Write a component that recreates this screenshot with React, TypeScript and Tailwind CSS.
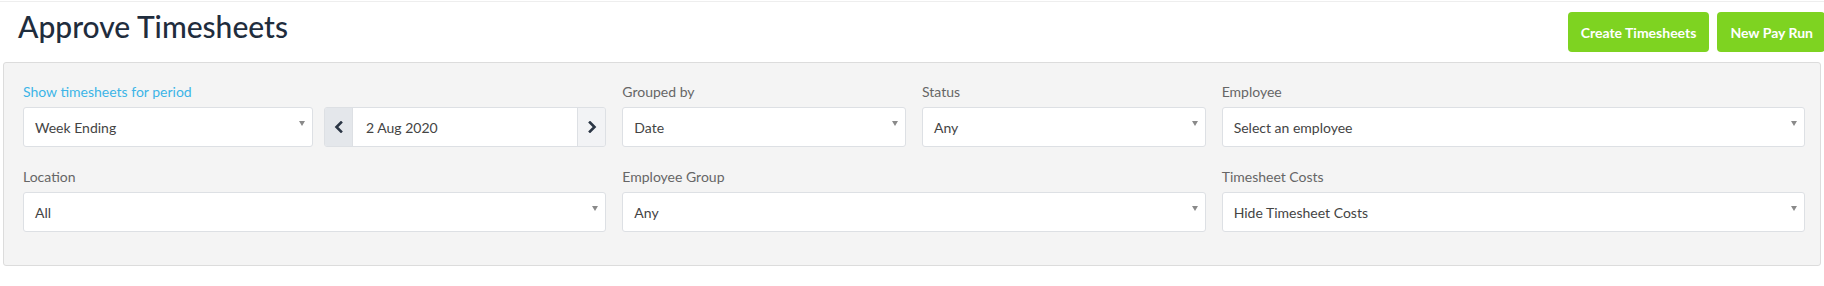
import React from "react";

const font = { fontFamily: "Lato, 'Open Sans', Arial, sans-serif" };

function Caret() {
  return (
    <span className="absolute right-[7px] top-[13px] w-0 h-0 border-x-[3px] border-x-transparent border-t-[5px] border-t-[#8a8a8a]" />
  );
}

function Select({ value }: { value: string }) {
  return (
    <div className="relative h-[40px] bg-white border border-[#dde0e4] rounded-[3px] flex items-center pl-[11px] text-[14px] text-[#444]">
      {value}
      <Caret />
    </div>
  );
}

function Label({ text, blue }: { text: string; blue?: boolean }) {
  return (
    <div className={`text-[14px] leading-[18px] mb-[6px] ${blue ? "text-[#3cb4e7]" : "text-[#666]"}`}>{text}</div>
  );
}

function Chevron({ dir }: { dir: "l" | "r" }) {
  return (
    <svg width="10" height="12" viewBox="0 0 10 12">
      <polyline
        points={dir === "l" ? "7,1.5 2.5,6 7,10.5" : "3,1.5 7.5,6 3,10.5"}
        fill="none"
        stroke="#2b3645"
        strokeWidth="2.6"
        strokeLinecap="square"
      />
    </svg>
  );
}

export default function App() {
  return (
    <div className="bg-white w-[1824px] h-[286px] pt-px" style={font}>
      <div className="h-px bg-[#eeeeee]" />
      <div className="h-[60px] flex items-start justify-between pl-[18px]">
        <h1 className="mt-[7px] text-[30px] leading-[34px] font-medium text-[#1f2d3d]">Approve Timesheets</h1>
        <div className="flex gap-[8px] mt-[10px] -mr-[1px]">
          <button className="h-[40px] px-[13px] rounded-[4px] bg-[#7ed321] text-white font-bold text-[14px]">Create Timesheets</button>
          <button className="h-[40px] pl-[13px] pr-[12px] rounded-[4px] bg-[#7ed321] text-white font-bold text-[14px]">New Pay Run</button>
        </div>
      </div>
      <div className="mx-[3px] border border-[#dcdcdc] rounded-[3px] bg-[#f4f4f4] pl-[19px] pr-[15px] pt-[20px] pb-[33px]">
        <div className="grid grid-cols-12 gap-x-[16px] gap-y-[21px]">
          <div className="col-span-4">
            <Label text="Show timesheets for period" blue />
            <div className="grid grid-cols-[290px_1fr] gap-[11px]">
              <Select value="Week Ending" />
              <div className="flex h-[40px] border border-[#dde0e4] rounded-[3px] overflow-hidden">
                <div className="w-[28px] bg-[#e4e7eb] flex items-center justify-center border-r border-[#dde0e4]">
                  <Chevron dir="l" />
                </div>
                <div className="flex-1 bg-white flex items-center pl-[13px] text-[14px] text-[#444]">2 Aug 2020</div>
                <div className="w-[28px] bg-[#f2f3f5] flex items-center justify-center border-l border-[#dde0e4]">
                  <Chevron dir="r" />
                </div>
              </div>
            </div>
          </div>
          <div className="col-span-2">
            <Label text="Grouped by" />
            <Select value="Date" />
          </div>
          <div className="col-span-2">
            <Label text="Status" />
            <Select value="Any" />
          </div>
          <div className="col-span-4">
            <Label text="Employee" />
            <Select value="Select an employee" />
          </div>
          <div className="col-span-4">
            <Label text="Location" />
            <Select value="All" />
          </div>
          <div className="col-span-4">
            <Label text="Employee Group" />
            <Select value="Any" />
          </div>
          <div className="col-span-4">
            <Label text="Timesheet Costs" />
            <Select value="Hide Timesheet Costs" />
          </div>
        </div>
      </div>
    </div>
  );
}
